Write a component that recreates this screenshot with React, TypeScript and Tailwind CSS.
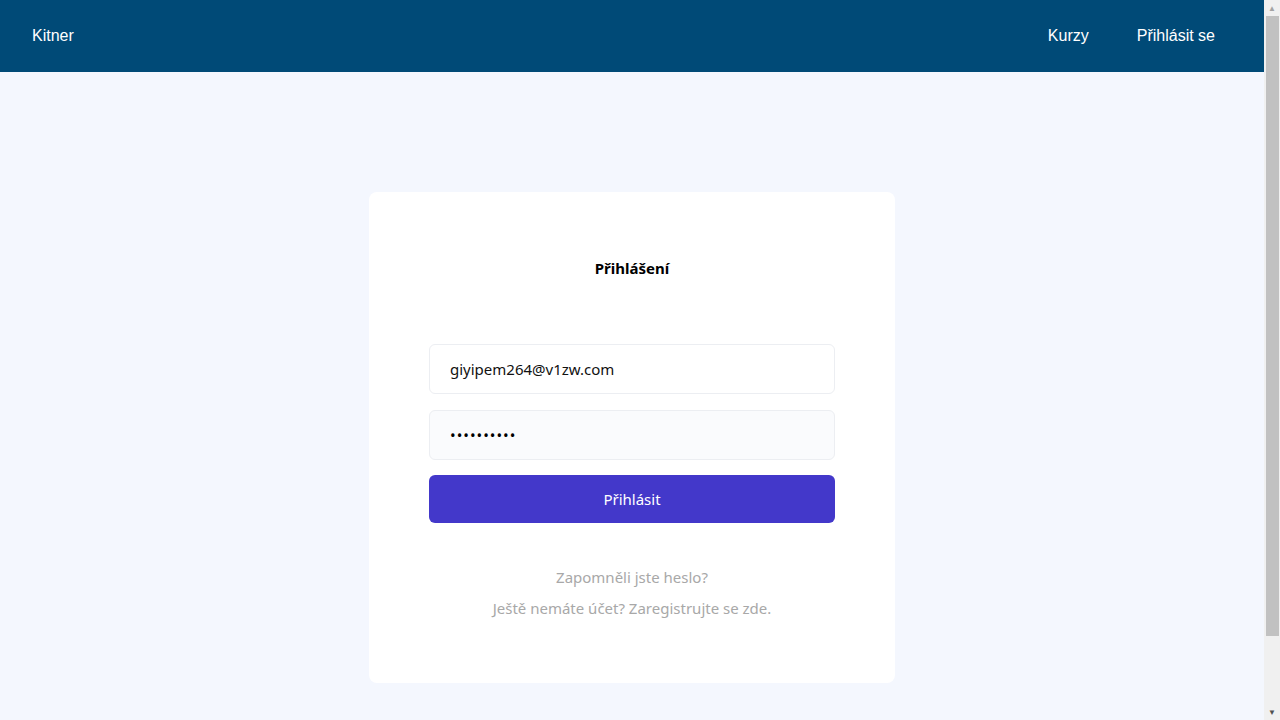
import { useState } from "react";

function App() {
  const [email, setEmail] = useState("giyipem264@v1zw.com");
  const [password, setPassword] = useState("heslo12345");

  return (
    <div className="h-screen flex bg-[#f4f7fe]" style={{ fontFamily: "'Noto Sans', 'Open Sans', sans-serif" }}>
      <div className="flex-1 overflow-y-auto [scrollbar-width:none]">
        {/* navbar */}
        <nav
          className="h-[72px] bg-[#004a77] text-white flex items-center justify-between pl-8 pr-[49px] text-base"
          style={{ fontFamily: "'Liberation Sans', Arial, sans-serif" }}
        >
          <a className="cursor-pointer">Kitner</a>
          <div className="flex items-center gap-12">
            <a className="cursor-pointer">Kurzy</a>
            <a className="cursor-pointer">Přihlásit se</a>
          </div>
        </nav>

        {/* login card */}
        <div className="flex justify-center pt-[120px] pb-[125px]">
          <div className="w-[526px] bg-white rounded-lg px-[60px] pt-16 pb-[63px] flex flex-col">
            <h1 className="text-center text-[15px] font-bold leading-6 text-black">Přihlášení</h1>
            <form className="mt-16 flex flex-col gap-4" onSubmit={(e) => e.preventDefault()}>
              <input
                className="h-[50px] w-full rounded-md border border-[#eceef2] bg-white px-5 text-[15px] text-[#111] outline-none"
                value={email}
                onChange={(e) => setEmail(e.target.value)}
              />
              <input
                type="password"
                className="h-[50px] w-full rounded-md border border-[#eceef2] bg-[#fafbfd] px-5 text-[15px] tracking-[1px] text-black outline-none"
                value={password}
                onChange={(e) => setPassword(e.target.value)}
              />
              <button
                type="submit"
                className="h-12 -mt-[1px] w-full rounded-md bg-[#4338ca] text-white text-[15px] cursor-pointer"
              >
                Přihlásit
              </button>
            </form>
            <div className="mt-[42px] flex flex-col items-center gap-[7px] text-[15px] text-[#a8a8a8] leading-6">
              <a className="cursor-pointer">Zapomněli jste heslo?</a>
              <a className="cursor-pointer">Ještě nemáte účet? Zaregistrujte se zde.</a>
            </div>
          </div>
        </div>
      </div>

      {/* scrollbar */}
      <div className="w-4 bg-[#f0f0f0] flex flex-col items-center">
        <div className="h-4 flex items-center justify-center text-[8px] text-[#a3a3a3] leading-none">▲</div>
        <div className="w-[13px] h-[620px] bg-[#c1c1c1]" />
        <div className="flex-1" />
        <div className="h-4 flex items-center justify-center text-[8px] text-[#505050] leading-none">▼</div>
      </div>
    </div>
  );
}

export default App;
